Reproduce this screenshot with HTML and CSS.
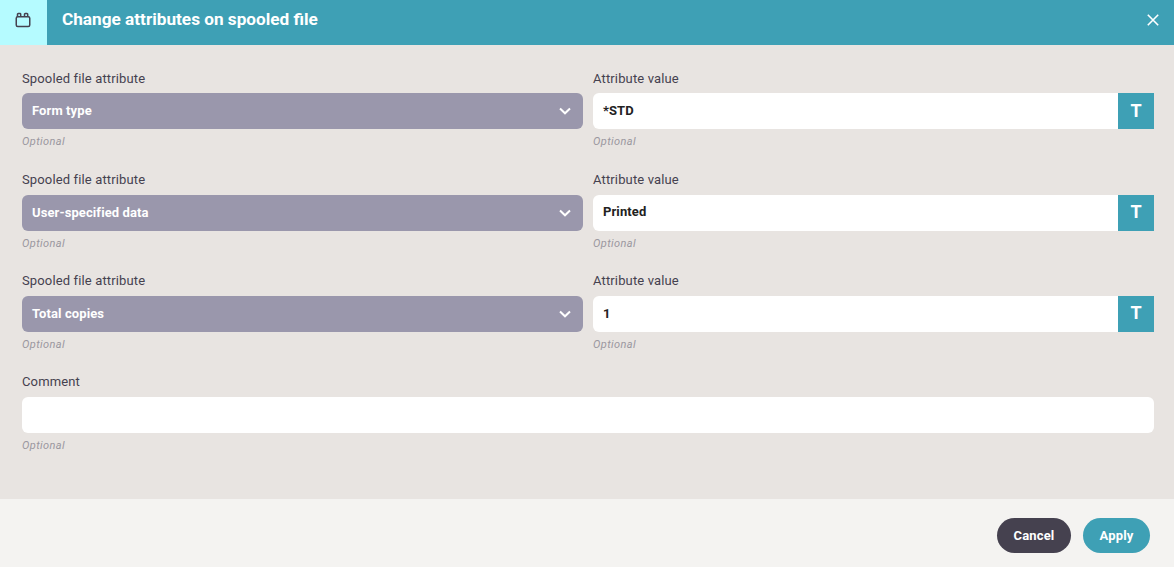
FILE: index.html
```html
<!DOCTYPE html>
<html lang="en">
<head>
<meta charset="utf-8">
<title>Change attributes on spooled file</title>
<link rel="stylesheet" href="styles.css">
</head>
<body>
<div class="dialog">
  <header class="header">
    <div class="header-icon">
      <svg width="16" height="16" viewBox="0 0 16 16" fill="none" stroke="#45414f" stroke-width="1.5" stroke-linejoin="round"><rect x="1.25" y="4.75" width="13.5" height="9.75" rx="1.5"/><path d="M2.5 4.75V2.2a.7.7 0 0 1 .7-.7h1.8a.7.7 0 0 1 .7.7v2.55M9.5 4.75V2.2a.7.7 0 0 1 .7-.7h1.8a.7.7 0 0 1 .7.7v2.55"/></svg>
    </div>
    <h1 class="title">Change attributes on spooled file</h1>
    <button class="close" aria-label="Close">
      <svg width="12" height="12" viewBox="0 0 12 12" fill="none" stroke="#fff" stroke-width="1.6"><path d="M.8.8l10.4 10.4M11.2.8L.8 11.2"/></svg>
    </button>
  </header>
  <main class="content">
    <div class="field">
      <div class="label">Spooled file attribute</div>
      <div class="select"><span>Form type</span><svg class="chev" width="12" height="8" viewBox="0 0 12 8" fill="none" stroke="#fff" stroke-width="2"><path d="M1 1.5l5 4.8 5-4.8"/></svg></div>
      <div class="hint">Optional</div>
    </div>
    <div class="field">
      <div class="label">Attribute value</div>
      <div class="input-group"><div class="input">*STD</div><div class="type-btn">T</div></div>
      <div class="hint">Optional</div>
    </div>
    <div class="field">
      <div class="label">Spooled file attribute</div>
      <div class="select"><span>User-specified data</span><svg class="chev" width="12" height="8" viewBox="0 0 12 8" fill="none" stroke="#fff" stroke-width="2"><path d="M1 1.5l5 4.8 5-4.8"/></svg></div>
      <div class="hint">Optional</div>
    </div>
    <div class="field">
      <div class="label">Attribute value</div>
      <div class="input-group"><div class="input">Printed</div><div class="type-btn">T</div></div>
      <div class="hint">Optional</div>
    </div>
    <div class="field">
      <div class="label">Spooled file attribute</div>
      <div class="select"><span>Total copies</span><svg class="chev" width="12" height="8" viewBox="0 0 12 8" fill="none" stroke="#fff" stroke-width="2"><path d="M1 1.5l5 4.8 5-4.8"/></svg></div>
      <div class="hint">Optional</div>
    </div>
    <div class="field">
      <div class="label">Attribute value</div>
      <div class="input-group"><div class="input">1</div><div class="type-btn">T</div></div>
      <div class="hint">Optional</div>
    </div>
    <div class="field wide">
      <div class="label">Comment</div>
      <div class="input round"></div>
      <div class="hint">Optional</div>
    </div>
  </main>
  <footer class="footer">
    <button class="btn cancel">Cancel</button>
    <button class="btn apply">Apply</button>
  </footer>
</div>
</body>
</html>
```
FILE: styles.css
```css
* { box-sizing: border-box; }
html, body { margin: 0; height: 100%; }
body { font-family: Roboto, sans-serif; background: #e8e4e1; overflow: hidden; }
.dialog { display: flex; flex-direction: column; height: 567px; }
.header { flex: 0 0 45px; display: flex; align-items: center; background: #3ea0b5; }
.header-icon { width: 47px; height: 45px; background: #b5fbff; display: flex; align-items: center; justify-content: center; padding-right: 2px; padding-bottom: 5px; }
.title { flex: 1; margin: 0 0 8px 15px; font-size: 17.2px; font-weight: 700; line-height: 24px; color: #fff; }
.close { border: 0; background: none; padding: 0; margin: 0 15px 6px 0; width: 12px; height: 12px; display: flex; }
.content { flex: 1; display: grid; grid-template-columns: 561px 561px; column-gap: 10px; grid-auto-rows: 101.2px; padding: 23.8px 20px 0 22px; align-content: start; }
.wide { grid-column: 1 / -1; }
.label { height: 24.6px; font-size: 13px; line-height: 20px; color: #45414f; letter-spacing: .14px; }
.select { height: 36px; background: #9a97ac; border-radius: 6px; display: flex; align-items: center; justify-content: space-between; padding: 0 12px 0 10px; color: #fff; font-size: 13px; font-weight: 700; letter-spacing: .1px; }
.select span { margin-bottom: 1px; }
.chev { display: block; }
.input-group { display: flex; height: 36px; }
.input { flex: 1; height: 36px; background: #fff; border-radius: 6px 0 0 6px; padding: 0 10px 1.4px; display: flex; align-items: center; font-size: 13px; font-weight: 700; color: #222; letter-spacing: .1px; }
.input.round { border-radius: 6px; }
.type-btn { width: 36px; padding-bottom: 1px; background: #3ea0b5; color: #fff; font-size: 18px; font-weight: 700; line-height: 20px; display: flex; align-items: center; justify-content: center; }
.hint { margin-top: 6px; font-size: 11px; line-height: 14px; font-style: italic; color: #9a979f; letter-spacing: .4px; }
.footer { flex: 0 0 68px; background: #f4f3f1; display: flex; justify-content: flex-end; align-items: flex-start; gap: 12px; padding: 19px 24px 0 0; }
.btn { height: 35px; border: 0; border-radius: 18px; color: #fff; font-family: inherit; font-size: 13px; font-weight: 700; letter-spacing: .15px; padding: 0; }
.cancel { width: 74px; background: #45414f; }
.apply { width: 67px; background: #3ea0b5; }
```
